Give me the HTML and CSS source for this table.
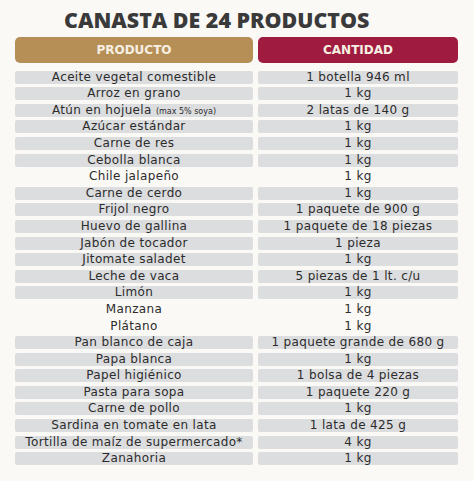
FILE: index.html
```html
<!DOCTYPE html>
<html lang="es">
<head>
<meta charset="utf-8">
<link rel="stylesheet" href="styles.css">
</head>
<body>
<div class="page">
  <h1 class="title">CANASTA DE 24 PRODUCTOS</h1>
  <div class="table">
    <div class="head head-prod">PRODUCTO</div>
    <div class="head head-cant">CANTIDAD</div>

    <div class="cell">Aceite vegetal comestible</div><div class="cell">1 botella 946 ml</div>
    <div class="cell">Arroz en grano</div><div class="cell">1 kg</div>
    <div class="cell">Atún en hojuela <span class="small">(max 5% soya)</span></div><div class="cell">2 latas de 140 g</div>
    <div class="cell">Azúcar estándar</div><div class="cell">1 kg</div>
    <div class="cell">Carne de res</div><div class="cell">1 kg</div>
    <div class="cell">Cebolla blanca</div><div class="cell">1 kg</div>
    <div class="cell plain">Chile jalapeño</div><div class="cell plain">1 kg</div>
    <div class="cell">Carne de cerdo</div><div class="cell">1 kg</div>
    <div class="cell">Frijol negro</div><div class="cell">1 paquete de 900 g</div>
    <div class="cell">Huevo de gallina</div><div class="cell">1 paquete de 18 piezas</div>
    <div class="cell">Jabón de tocador</div><div class="cell">1 pieza</div>
    <div class="cell">Jitomate saladet</div><div class="cell">1 kg</div>
    <div class="cell">Leche de vaca</div><div class="cell">5 piezas de 1 lt. c/u</div>
    <div class="cell">Limón</div><div class="cell">1 kg</div>
    <div class="cell plain">Manzana</div><div class="cell plain">1 kg</div>
    <div class="cell plain">Plátano</div><div class="cell plain">1 kg</div>
    <div class="cell">Pan blanco de caja</div><div class="cell">1 paquete grande de 680 g</div>
    <div class="cell">Papa blanca</div><div class="cell">1 kg</div>
    <div class="cell">Papel higiénico</div><div class="cell">1 bolsa de 4 piezas</div>
    <div class="cell">Pasta para sopa</div><div class="cell">1 paquete 220 g</div>
    <div class="cell">Carne de pollo</div><div class="cell">1 kg</div>
    <div class="cell">Sardina en tomate en lata</div><div class="cell">1 lata de 425 g</div>
    <div class="cell">Tortilla de maíz de supermercado*</div><div class="cell">4 kg</div>
    <div class="cell">Zanahoria</div><div class="cell">1 kg</div>
  </div>
</div>
</body>
</html>
```
FILE: styles.css
```css
html, body {
  margin: 0;
  padding: 0;
}
body {
  background: #fbf9f6;
  font-family: "DejaVu Sans", "Liberation Sans", sans-serif;
  color: #2c2c2c;
  width: 474px;
  height: 481px;
  overflow: hidden;
}
.page {
  padding: 7px 16px 0 15px;
}
.title {
  margin: 0 0 0 49px;
  font-family: "Open Sans", "Liberation Sans", sans-serif;
  font-size: 21.4px;
  font-weight: 800;
  color: #3a3a3a;
  line-height: 26px;
}
.table {
  margin-top: 4px;
  display: grid;
  grid-template-columns: 238px 200px;
  grid-template-rows: 30px;
  column-gap: 5px;
  grid-auto-rows: 13px;
  row-gap: 3.6px;
}
.head {
  align-self: start;
  height: 25.6px;
  border-radius: 5px;
  display: flex;
  align-items: center;
  justify-content: center;
  color: #f7efe3;
  font-weight: 700;
  font-size: 12px;
}
.head-prod { background: #b58f56; }
.head-cant { background: #9f1b3f; }
.cell {
  background: #dcdddf;
  border-radius: 2px;
  font-size: 12px;
  letter-spacing: 0.35px;
  line-height: 13px;
  text-align: center;
  white-space: nowrap;
  color: #2c2c2c;
}
.cell.plain { background: transparent; }
.small { font-size: 8px; letter-spacing: 0; }
```
